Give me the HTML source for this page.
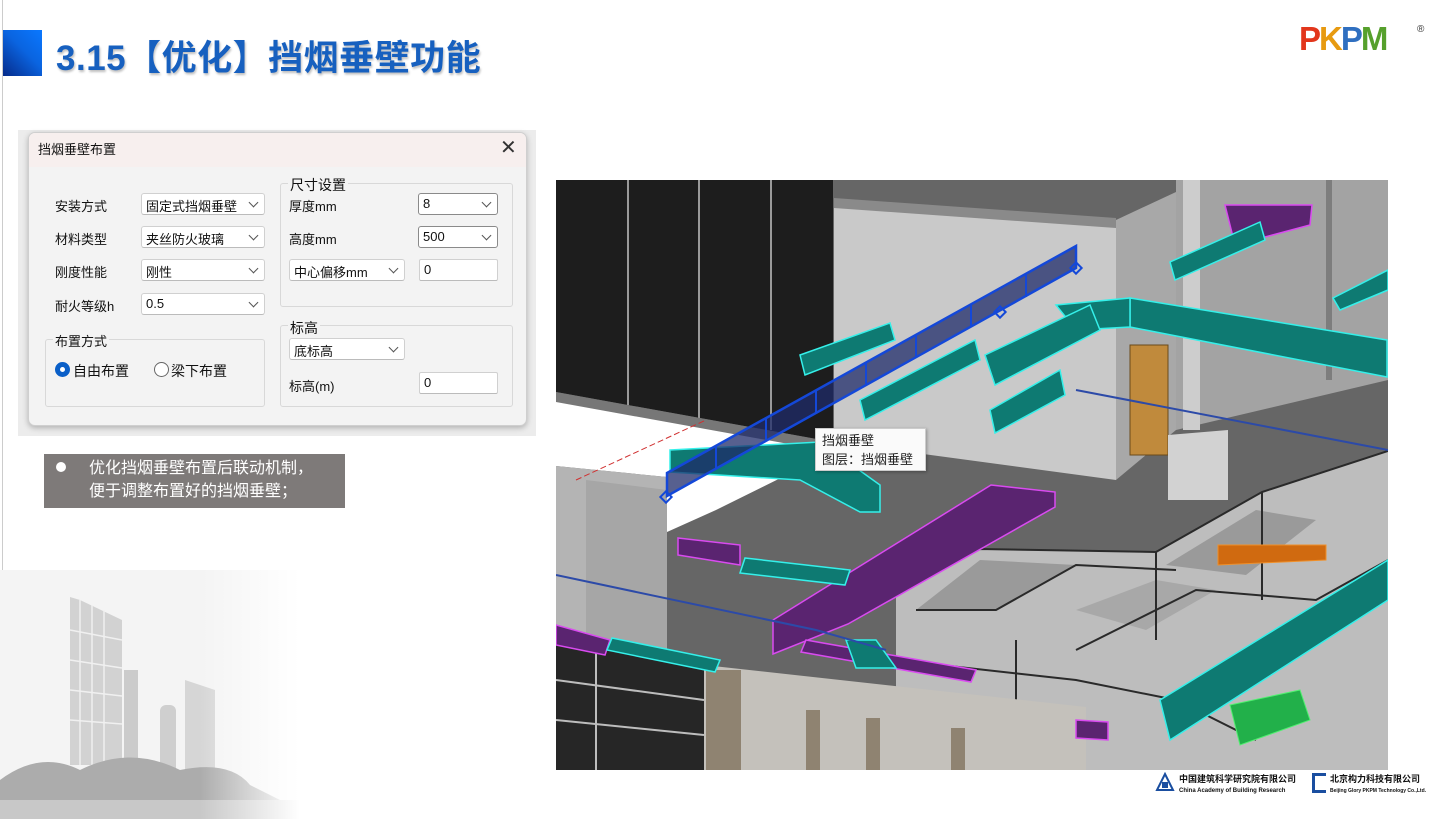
<!DOCTYPE html>
<html><head><meta charset="utf-8"><style>
*{margin:0;padding:0;box-sizing:border-box}
body{width:1455px;height:819px;background:#fff;position:relative;overflow:hidden;font-family:"Liberation Sans","Noto Sans CJK SC",sans-serif}
.abs{position:absolute}
.t{font-size:13px;color:#111;white-space:nowrap}
.cb{position:absolute;height:22px;background:#fff;border:1px solid #d0d0d0;border-bottom-color:#bbb;border-radius:3px;font-size:13px;padding:2px 0 0 4px;color:#111}
.cb.f{border:1px solid #8a8a8a}
.cb .ar{position:absolute;right:7px;top:5px;width:7px;height:7px;border-right:1.3px solid #555;border-bottom:1.3px solid #555;transform:rotate(45deg)}
.grp{position:absolute;border:1px solid #d8d8d8;border-radius:3px}
.gt{position:absolute;background:#f3f3f3;font-size:13px;padding:0 2px;color:#111}
</style></head><body>
<div class="abs" style="left:2px;top:0;width:1px;height:819px;background:#ccc"></div>
<div class="abs" style="left:3px;top:30px;width:39px;height:46px;background:linear-gradient(225deg,#0a78ff 0%,#0a64e0 45%,#062b8a 100%)"></div>
<div class="abs" style="left:56px;top:30px;font-size:35px;font-weight:bold;color:#1760bf;letter-spacing:0.5px;text-shadow:1px 2px 2px rgba(0,0,0,0.25)">3.15【优化】挡烟垂壁功能</div>
<div class="abs" style="left:1299px;top:20px;font-size:33px;font-weight:900;letter-spacing:-2px;font-family:'Liberation Sans',sans-serif"><span style="color:#e2361c">P</span><span style="color:#e79a10">K</span><span style="color:#2f6fc0">P</span><span style="color:#56a02c">M</span></div>
<div class="abs" style="left:1417px;top:24px;font-size:10px;color:#333">®</div>

<!-- dialog -->
<div class="abs" style="left:18px;top:130px;width:518px;height:306px;background:#ececec"></div>
<div class="abs" style="left:28px;top:132px;width:499px;height:294px;background:#f3f3f3;border:1px solid #cfcfcf;border-radius:7px;box-shadow:0 2px 6px rgba(0,0,0,0.25);overflow:hidden">
 <div style="height:34px;background:#f7efee"></div>
</div>
<div class="abs t" style="left:38px;top:139px;font-size:13px">挡烟垂壁布置</div>
<div class="abs" style="left:500px;top:139px;font-size:20px;color:#333;line-height:18px">✕</div>
<div class="abs t" style="left:55px;top:196px">安装方式</div>
<div class="abs t" style="left:55px;top:229px">材料类型</div>
<div class="abs t" style="left:55px;top:262px">刚度性能</div>
<div class="abs t" style="left:55px;top:296px">耐火等级h</div>
<div class="cb" style="left:141px;top:193px;width:124px">固定式挡烟垂壁<span class="ar"></span></div>
<div class="cb" style="left:141px;top:226px;width:124px">夹丝防火玻璃<span class="ar"></span></div>
<div class="cb" style="left:141px;top:259px;width:124px">刚性<span class="ar"></span></div>
<div class="cb" style="left:141px;top:293px;width:124px">0.5<span class="ar"></span></div>
<div class="grp" style="left:45px;top:339px;width:220px;height:68px"></div>
<div class="gt" style="left:53px;top:331px">布置方式</div>
<div class="abs" style="left:55px;top:362px;width:15px;height:15px;border-radius:50%;background:#0a5fc8"><div style="position:absolute;left:5px;top:5px;width:5px;height:5px;border-radius:50%;background:#fff"></div></div>
<div class="abs t" style="left:73px;top:361px;font-size:14px">自由布置</div>
<div class="abs" style="left:154px;top:362px;width:15px;height:15px;border-radius:50%;border:1px solid #666;background:#fff"></div>
<div class="abs t" style="left:171px;top:361px;font-size:14px">梁下布置</div>
<div class="grp" style="left:280px;top:183px;width:233px;height:124px"></div>
<div class="gt" style="left:288px;top:175px;font-size:14px">尺寸设置</div>
<div class="abs t" style="left:289px;top:196px">厚度mm</div>
<div class="abs t" style="left:289px;top:229px">高度mm</div>
<div class="cb f" style="left:418px;top:193px;width:80px">8<span class="ar"></span></div>
<div class="cb f" style="left:418px;top:226px;width:80px">500<span class="ar"></span></div>
<div class="cb" style="left:289px;top:259px;width:116px">中心偏移mm<span class="ar"></span></div>
<div class="cb" style="left:419px;top:259px;width:79px;border-radius:2px">0</div>
<div class="grp" style="left:280px;top:325px;width:233px;height:82px"></div>
<div class="gt" style="left:288px;top:318px;font-size:14px">标高</div>
<div class="cb" style="left:289px;top:338px;width:116px">底标高<span class="ar"></span></div>
<div class="abs t" style="left:289px;top:376px">标高(m)</div>
<div class="cb" style="left:419px;top:372px;width:79px;border-radius:2px">0</div>

<!-- bullet -->
<div class="abs" style="left:44px;top:454px;width:301px;height:54px;background:#7e7a79"></div>
<div class="abs" style="left:56px;top:462px;width:10px;height:10px;border-radius:50%;background:#fff"></div>
<div class="abs" style="left:89px;top:457px;color:#fff;font-size:16px;line-height:23px">优化挡烟垂壁布置后联动机制，<br>便于调整布置好的挡烟垂壁；</div>

<!-- city -->
<svg class="abs" style="left:0;top:570px" width="300" height="249">
<defs><linearGradient id="fg" x1="0" y1="0" x2="1" y2="0"><stop offset="0" stop-color="#fff" stop-opacity="0"/><stop offset="1" stop-color="#fff"/></linearGradient></defs>
<rect width="300" height="249" fill="#f4f4f4"/>
<polygon points="70,27 80,30 122,50 122,195 70,195" fill="#d2d2d2"/>
<g stroke="#f0f0f0" stroke-width="1.5"><line x1="70" y1="60" x2="122" y2="70"/><line x1="70" y1="90" x2="122" y2="98"/><line x1="70" y1="120" x2="122" y2="126"/><line x1="70" y1="150" x2="122" y2="154"/><line x1="80" y1="30" x2="80" y2="195"/><line x1="92" y1="35" x2="92" y2="195"/><line x1="104" y1="40" x2="104" y2="195"/></g>
<rect x="124" y="100" width="14" height="100" fill="#cbcbcb"/>
<rect x="160" y="135" width="16" height="75" rx="6" fill="#cfcfcf"/>
<polygon points="185,110 215,120 215,210 185,210" fill="#d6d6d6"/>
<path d="M0,210 Q40,180 80,200 Q130,175 180,200 Q230,190 250,215 L300,240 L0,249Z" fill="#acacac"/>
<rect x="0" y="230" width="300" height="19" fill="#c8c8c8"/>
<rect x="200" y="0" width="100" height="249" fill="url(#fg)"/>
</svg>

<!-- 3D scene -->
<svg class="abs" style="left:556px;top:180px" width="832" height="590" viewBox="0 0 832 590">
<rect width="832" height="590" fill="#666"/>
<polygon points="0,0 277,0 277,262 0,212" fill="#1d1d1d"/>
<g stroke="#9a9a9a" stroke-width="2"><line x1="72" y1="0" x2="72" y2="225"/><line x1="143" y1="0" x2="143" y2="238"/><line x1="215" y1="0" x2="215" y2="250"/></g>
<polygon points="0,212 277,262 277,272 0,222" fill="#777"/>
<polygon points="0,222 277,272 160,330 111,352 111,297 0,286" fill="#ffffff"/>
<polygon points="278,24 560,46 560,300 278,262" fill="#c9c9c9"/>
<polygon points="278,18 560,38 560,48 278,28" fill="#8a8a8a"/>
<polygon points="560,40 620,12 620,250 560,300" fill="#a8a8a8"/>
<polygon points="620,0 832,0 832,200 620,250" fill="#a3a3a3"/>
<rect x="627" y="0" width="17" height="250" fill="#cdcdcd"/>
<rect x="770" y="0" width="6" height="200" fill="#7d7d7d"/>
<rect x="574" y="165" width="38" height="110" fill="#c08a3c" stroke="#6a4a1a"/>
<polygon points="612,255 672,250 672,320 612,320" fill="#d2d2d2"/>
<!-- bottom walls -->
<polygon points="340,414 424,369 600,372 706,312 832,271 832,590 340,590" fill="#bdbdbd"/>
<polygon points="424,380 520,385 440,430 360,430" fill="#9a9a9a"/>
<polygon points="610,385 700,330 760,340 690,395" fill="#9a9a9a"/>
<polygon points="520,430 600,400 660,410 590,450" fill="#a8a8a8"/>
<g stroke="#2a2a2a" stroke-width="2" fill="none">
<polyline points="340,414 424,369 600,372 706,312 832,271"/>
<polyline points="360,430 440,430 520,385 620,390"/>
<polyline points="600,372 600,460"/>
<polyline points="520,470 640,410 760,420 832,380"/>
<polyline points="706,312 706,420"/>
<polyline points="460,460 460,520"/>
<polyline points="340,480 520,500 620,520 700,560"/>
</g>
<!-- left wall -->
<polygon points="0,286 111,297 111,590 0,590" fill="#b4b4b4"/>
<polygon points="30,300 111,310 111,590 30,590" fill="#a6a6a6"/>
<polygon points="0,463 148,485 148,590 0,590" fill="#262626"/>
<g stroke="#bdbdbd" stroke-width="2"><line x1="0" y1="500" x2="148" y2="520"/><line x1="0" y1="540" x2="148" y2="555"/><line x1="40" y1="470" x2="40" y2="590"/></g>
<polygon points="148,485 530,527 530,590 148,590" fill="#c4c1bb"/>
<g fill="#8f8371"><rect x="150" y="490" width="35" height="100"/><rect x="250" y="530" width="14" height="60"/><rect x="310" y="538" width="14" height="52"/><rect x="395" y="548" width="14" height="42"/></g>
<!-- purple -->
<g fill="#5a2470" stroke="#d94bf0" stroke-width="1.5">
<polygon points="435,305 499,312 499,327 292,444 217,474 217,440"/>
<polygon points="669,25 756,25 754,45 679,65"/>
<polygon points="122,358 184,365 184,385 122,375"/>
<polygon points="0,445 54,460 49,475 0,465"/>
<polygon points="250,460 420,490 415,502 245,472"/>
<polygon points="520,540 552,542 552,560 520,558"/>
</g>
<!-- teal -->
<g fill="#0e7a72" stroke="#35f0ea" stroke-width="1.5">
<polygon points="574,118 831,160 831,197 574,147"/>
<polygon points="500,125 574,118 574,147 520,150"/>
<polygon points="429,175 534,125 544,150 439,205"/>
<polygon points="614,82 704,42 709,60 619,100"/>
<polygon points="777,118 832,90 832,110 784,130"/>
<polygon points="434,230 504,190 509,215 439,253"/>
<polygon points="304,220 419,160 424,180 309,240"/>
<polygon points="244,175 334,143 339,160 249,195"/>
<polygon points="114,270 264,262 324,305 324,332 304,332 244,300 114,292"/>
<polygon points="189,378 294,390 289,405 184,393"/>
<polygon points="56,458 164,480 159,492 51,470"/>
<polygon points="604,520 832,380 832,420 614,560"/>
<polygon points="290,460 320,460 340,488 300,488"/>
</g>
<polygon points="674,525 744,510 754,540 684,565" fill="#22b04a" stroke="#50f070"/>
<polygon points="662,365 770,365 770,380 662,385" fill="#d06a10" stroke="#f0902a"/>
<g stroke="#2c4aa8" stroke-width="2" fill="none"><polyline points="0,395 260,450 330,470"/><polyline points="520,210 832,270"/></g>
<!-- smoke wall -->
<polygon points="111,293 520,66 520,88 111,316" fill="#1f2b6a" fill-opacity="0.75" stroke="#1448d8" stroke-width="2.5"/>
<g stroke="#1448d8" stroke-width="2"><line x1="160" y1="266" x2="160" y2="289"/><line x1="210" y1="238" x2="210" y2="261"/><line x1="260" y1="210" x2="260" y2="233"/><line x1="310" y1="183" x2="310" y2="206"/><line x1="360" y1="155" x2="360" y2="178"/><line x1="415" y1="124" x2="415" y2="147"/><line x1="470" y1="94" x2="470" y2="117"/></g>
<g fill="none" stroke="#1448d8" stroke-width="2"><rect x="106" y="313" width="8" height="8" transform="rotate(45 110 317)"/><rect x="516" y="84" width="8" height="8" transform="rotate(45 520 88)"/><rect x="440" y="128" width="8" height="8" transform="rotate(45 444 132)"/></g>
<line x1="20" y1="300" x2="150" y2="240" stroke="#d03030" stroke-dasharray="6,3"/>
</svg>
<!-- tooltip -->
<div class="abs" style="left:815px;top:428px;width:111px;height:43px;background:#fafafa;border:1px solid #ccc;box-shadow:1px 1px 3px rgba(0,0,0,0.3);font-size:13px;color:#222;line-height:19px;padding:2px 0 0 6px">挡烟垂壁<br>图层：挡烟垂壁</div>

<!-- footer logos -->
<svg class="abs" style="left:1155px;top:772px" width="20" height="22"><path d="M10,2 L18,18 L2,18Z" fill="none" stroke="#1a4ea0" stroke-width="2"/><rect x="7" y="10" width="6" height="6" fill="#1a4ea0"/></svg>
<div class="abs" style="left:1179px;top:774px;font-size:9px;font-weight:bold;color:#111;line-height:10px">中国建筑科学研究院有限公司<br><span style="font-size:6px">China Academy of Building Research</span></div>
<div class="abs" style="left:1312px;top:773px;width:14px;height:20px;border:3px solid #1a4ea0;border-right:none"></div>
<div class="abs" style="left:1330px;top:774px;font-size:9px;font-weight:bold;color:#111;line-height:10px">北京构力科技有限公司<br><span style="font-size:5px">Beijing Glory PKPM Technology Co.,Ltd.</span></div>
</body></html>
